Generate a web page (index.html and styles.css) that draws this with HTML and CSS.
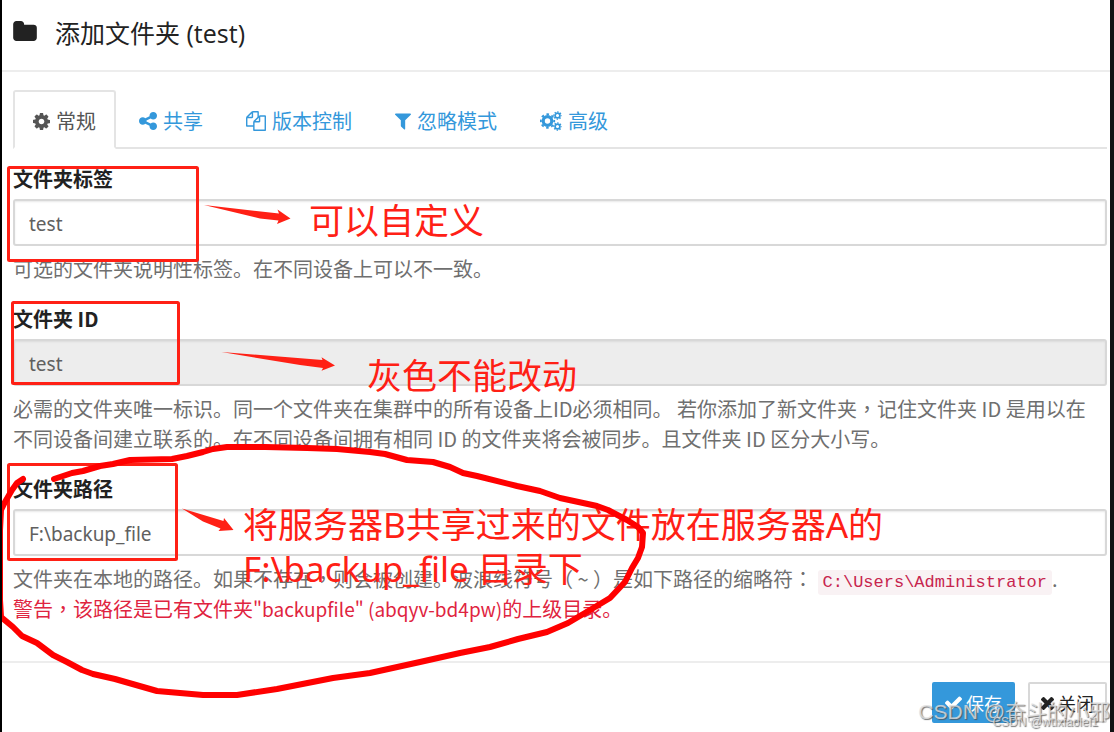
FILE: index.html
```html
<!DOCTYPE html>
<html lang="zh-CN">
<head>
<meta charset="utf-8">
<title>添加文件夹 (test)</title>
<link rel="stylesheet" href="styles.css">
</head>
<body>
<svg class="sprite" aria-hidden="true">
  <symbol id="cog" viewBox="128 128 1536 1536"><path d="M1152 896q0-106-75-181t-181-75-181 75-75 181 75 181 181 75 181-75 75-181zm512-109v222q0 12-8 23t-20 13l-185 28q-19 54-39 91 35 50 107 138 10 12 10 25t-9 23q-27 37-99 108t-94 71q-12 0-26-9l-138-108q-44 23-91 38-16 136-29 186-7 28-36 28h-222q-14 0-24.500-8.500t-11.500-21.500l-28-184q-49-16-90-37l-141 107q-10 9-25 9-14 0-25-11-126-114-165-168-7-10-7-23 0-12 8-23 15-21 51-66.500t54-70.500q-27-50-41-99l-183-27q-13-2-21-12.500t-8-23.500v-222q0-12 8-23t19-13l186-28q14-46 39-92-40-57-107-138-10-12-10-24 0-10 9-23 26-36 98.500-107.500t94.500-71.500q13 0 26 10l138 107q44-23 91-38 16-136 29-186 7-28 36-28h222q14 0 24.500 8.500t11.500 21.500l28 184q49 16 90 37l142-107q9-9 24-9 13 0 25 10 129 119 165 170 7 8 7 22 0 12-8 23-15 21-51 66.500t-54 70.500q26 50 41 98l183 28q13 2 21 12.500t8 23.500z"/></symbol>
</svg>

<main class="dialog">
  <header class="dialog-header">
    <svg class="folder-icon" viewBox="64 128 1664 1408" aria-hidden="true"><path d="M1728 608v704q0 92-66 158t-158 66h-1216q-92 0-158-66t-66-158v-960q0-92 66-158t158-66h320q92 0 158 66t66 158v32h672q92 0 158 66t66 158z"/></svg>
    <h1 class="dialog-title">添加文件夹 (test)</h1>
  </header>

  <div class="dialog-body">
    <nav class="tabs">
      <a class="tab tab-active" href="#general"><svg class="icon" width="17" height="17"><use href="#cog"/></svg>常规</a>
      <a class="tab" href="#sharing"><svg class="icon" width="18" height="18" viewBox="128 128 1536 1536"><path d="M1344 1024q133 0 226.500 93.500t93.500 226.500-93.500 226.500-226.500 93.500-226.500-93.500-93.500-226.500q0-12 2-34l-360-180q-92 86-218 86-133 0-226.500-93.500t-93.500-226.500 93.500-226.500 226.500-93.500q126 0 218 86l360-180q-2-22-2-34 0-133 93.500-226.500t226.500-93.500 226.500 93.500 93.500 226.500-93.500 226.500-226.500 93.500q-126 0-218-86l-360 180q2 22 2 34t-2 34l360 180q92-86 218-86z"/></svg>共享</a>
      <a class="tab" href="#versioning"><svg class="icon" width="20" height="20" viewBox="0 0 1792 1792"><path d="M1696 384q40 0 68 28t28 68v1216q0 40-28 68t-68 28h-960q-40 0-68-28t-28-68v-288h-544q-40 0-68-28t-28-68v-672q0-40 20-88t48-76l408-408q28-28 76-48t88-20h416q40 0 68 28t28 68v328q68-40 128-40h416zm-544 213l-299 299h299v-299zm-640-384l-299 299h299v-299zm196 647l316-316v-416h-384v416q0 40-28 68t-68 28h-416v640h512v-256q0-40 20-88t48-76zm956 804v-1152h-384v416q0 40-28 68t-68 28h-416v640h896z"/></svg>版本控制</a>
      <a class="tab" href="#ignore"><svg class="icon" width="16" height="17" viewBox="192 256 1408 1408"><path d="M1595 295q17 41-14 70l-493 493v742q0 42-39 59-13 5-25 5-27 0-45-19l-256-256q-19-19-19-45v-486l-493-493q-31-29-14-70 17-39 59-39h1280q42 0 59 39z"/></svg>忽略模式</a>
      <a class="tab" href="#advanced"><svg class="icon" width="22" height="20" viewBox="0 0 22 20"><g fill="none" stroke="currentColor"><circle cx="7.500" cy="10" r="4.300" stroke-width="3.200"/><circle cx="7.500" cy="10" r="6.700" stroke-width="1.900" stroke-dasharray="2.630 2.630" stroke-dashoffset="1.300"/><circle cx="17.500" cy="4.500" r="2.400" stroke-width="1.700"/><circle cx="17.500" cy="4.500" r="3.700" stroke-width="1.200" stroke-dasharray="1.450 1.450" stroke-dashoffset=".7"/><circle cx="17.500" cy="15.500" r="2.400" stroke-width="1.700"/><circle cx="17.500" cy="15.500" r="3.700" stroke-width="1.200" stroke-dasharray="1.450 1.450" stroke-dashoffset=".7"/></g></svg>高级</a>
    </nav>

    <form class="pane" id="folder-form">
      <div class="group">
        <label class="label" for="folder-label">文件夹标签</label>
        <input class="field" id="folder-label" type="text" value="test">
        <p class="help">可选的文件夹说明性标签。在不同设备上可以不一致。</p>
      </div>
      <div class="group">
        <label class="label" for="folder-id">文件夹 ID</label>
        <input class="field" id="folder-id" type="text" value="test" readonly>
        <p class="help">必需的文件夹唯一标识。同一个文件夹在集群中的所有设备上ID必须相同。 若你添加了新文件夹<span lang="zh-Hant" class="mid">，</span>记住文件夹 ID 是用以在不同设备间建立联系的。在不同设备间拥有相同 ID 的文件夹将会被同步。且文件夹 ID 区分大小写。</p>
      </div>
      <div class="group">
        <label class="label" for="folder-path">文件夹路径</label>
        <input class="field" id="folder-path" type="text" value="F:\backup_file">
        <p class="help">文件夹在本地的路径。如果不存在<span lang="zh-Hant" class="mid">，</span>则会被创建。波浪线符号<span lang="zh-Hant" class="mid">（</span> ~ <span lang="zh-Hant" class="mid">）</span>是如下路径的缩略符<span lang="zh-Hant" class="mid">：</span> <code class="code">C:\Users\Administrator</code>.</p>
        <p class="help warning">警告<span lang="zh-Hant" class="mid">，</span>该路径是已有文件夹<span class="folder-name">"backupfile" (abqyv-bd4pw)</span>的上级目录。</p>
      </div>
    </form>
  </div>

  <footer class="dialog-footer">
    <button class="button button-primary" type="submit" form="folder-form"><svg class="icon" width="17" height="14" viewBox="121 334 1550 1188"><path d="M1671 566q0 40-28 68l-724 724-136 136q-28 28-68 28t-68-28l-136-136-362-362q-28-28-28-68t28-68l136-136q28-28 68-28t68 28l294 295 656-657q28-28 68-28t68 28l136 136q28 28 28 68z"/></svg>保存</button>
    <button class="button" type="button"><svg class="icon" width="13" height="13" viewBox="302 366 1188 1188"><path d="M1490 1322q0 40-28 68l-136 136q-28 28-68 28t-68-28l-294-294-294 294q-28 28-68 28t-68-28l-136-136q-28-28-28-68t28-68l294-294-294-294q-28-28-28-68t28-68l136-136q28-28 68-28t68 28l294 294 294-294q28-28 68-28t68 28l136 136q28 28 28 68t-28 68l-294 294 294 294q28 28 28 68z"/></svg>关闭</button>
  </footer>
</main>

<p class="note note-label">可以自定义</p>
<p class="note note-id">灰色不能改动</p>
<p class="note note-path">将服务器B共享过来的文件放在服务器A的<br>F:\backup_file 目录下</p>

<svg class="markup" width="1110" height="732" viewBox="0 0 1110 732" aria-hidden="true">
  <g fill="none" stroke="#ff2015" stroke-width="3">
    <rect x="8.500" y="167.500" width="189" height="93" rx="1"/>
    <rect x="12.500" y="302.500" width="166" height="81" rx="1"/>
    <rect x="8.500" y="464.500" width="168" height="95" rx="1"/>
  </g>
  <g fill="#ff2015">
    <path d="M204 205L279 213.500 277.500 209.500 290.500 218.500 277 224 278.500 220.500 260 218.500z"/>
    <path d="M221.500 352L322.500 360 321.500 357.300 335 365.500 321.500 370.700 323 368 300 365z"/>
    <path d="M182 508.500L223.500 521 224 518 233.500 530 218.500 531 220.500 528.500 203 521.500z"/>
  </g>
  <path fill="none" stroke="#f00" stroke-width="6" stroke-linecap="round" stroke-linejoin="round" d="M54 479L60 477 72 473 83 471 100 466 113 464 130 460 172 459 187 456 203 452 213 449 227 447H265L307 448 337 449 370 452 385 454 407 460 433 462 450 467 463 473 477 476 517 486 540 491 560 498 597 506 608 510 627 520 638 527 643 533 642 547 638 558 632 568 625 582 610 598 590 610 568 623 547 632 518 639 490 647 460 653 420 662 370 673 333 678 277 689 237 695 203 695 157 691 115 679 93 674 82 670 67 662 53 655 37 643 22 636 13 627 1 617 0 600V530L1 510 5 502 12 490 17 483 23 479"/>
</svg>

<p class="watermark watermark-large">CSDN @奋斗的小邪</p>
<p class="watermark watermark-small">CSDN @wuxiaolei1</p>
</body>
</html>
```
FILE: styles.css
```css
* {
  box-sizing: border-box;
}

body {
  position: relative;
  margin: 0;
  min-height: 100vh;
  overflow: hidden;
  border-left: 2px solid #000;
  border-right: 4px solid #111314;
  background: #fff;
  color: #222;
  font: 20px/30px "Noto Sans CJK SC", sans-serif;
}

h1,
p {
  margin: 0;
}

.sprite {
  display: none;
}

.dialog-header {
  display: flex;
  align-items: center;
  gap: 18px;
  padding: 15px 11px 19px;
  border-bottom: 2px solid #ededed;
}

.folder-icon {
  width: 24px;
  height: 20px;
  margin-bottom: 4px;
  fill: #222;
}

.dialog-title {
  font: 400 25px/36px "Open Sans", "Noto Sans CJK SC", sans-serif;
}

.dialog-body {
  padding: 18px 3px 17px 11px;
}

.tabs {
  display: flex;
  gap: 3px;
  border-bottom: 2px solid #e4e4e4;
}

.tab {
  display: flex;
  align-items: center;
  gap: 6px;
  padding: 16px 20px 11px;
  color: #3498db;
  text-decoration: none;
}

.tab-active {
  margin-bottom: -2px;
  padding: 14px 18px 11px;
  border: 2px solid #e4e4e4;
  border-bottom-color: #fff;
  border-radius: 3px 3px 0 0;
  background: #fff;
  color: #555;
}

.icon {
  flex: none;
  fill: currentColor;
}

.pane {
  padding-top: 15px;
}

.group {
  margin-bottom: 20px;
}

.label {
  display: block;
  margin-bottom: 5px;
  font-weight: 700;
}

.field {
  display: block;
  width: 100%;
  height: 47px;
  margin-bottom: 8px;
  padding: 4px 14px 2px;
  border: 2px solid #d8d8d8;
  border-radius: 3px;
  outline: 0;
  background: #fff;
  box-shadow: inset 0 1px 2px #e8e8e8;
  color: #606060;
  font: 19px/30px "Noto Sans", sans-serif;
}

.field:read-only {
  background: #ededed;
  box-shadow: inset 0 1px 2px #dcdcdc;
}

.help {
  padding-right: 8px;
  color: #6f6f6f;
}

.mid {
  font-family: "Noto Sans CJK TC", sans-serif;
}

.warning {
  color: #df2440;
}

.folder-name {
  font-size: 19px;
}

.code {
  padding: 3px 5px;
  border-radius: 3px;
  background: #f9f2f4;
  color: #c7254e;
  font: 17px/20px "Liberation Mono", monospace;
}

.dialog-footer {
  display: flex;
  justify-content: flex-end;
  gap: 13px;
  padding: 19px 3px 9px;
  border-top: 2px solid #ededed;
}

.button {
  display: flex;
  align-items: center;
  gap: 4px;
  height: 41px;
  padding: 1px 11px 0;
  border: 2px solid #d8d8d8;
  border-radius: 2px;
  background: #fff;
  color: #222;
  font: 18px/30px "Noto Sans CJK SC", sans-serif;
}

.button-primary {
  border-color: #3498db;
  background: #3498db;
  color: #fff;
}

.note {
  position: absolute;
  color: #ff2015;
  font: 35px/44px "Noto Sans", "Noto Sans CJK SC", sans-serif;
  white-space: nowrap;
}

.note-label {
  left: 307px;
  top: 199px;
}

.note-id {
  left: 365px;
  top: 354px;
}

.note-path {
  left: 241px;
  top: 503px;
}

.markup {
  position: absolute;
  top: 0;
  left: -2px;
}

.watermark {
  position: absolute;
  color: rgb(225 225 225 / 80%);
  font-family: "Liberation Sans", "Noto Sans CJK SC", sans-serif;
  text-shadow: 1px 1px 1px rgb(80 80 80 / 80%);
  white-space: nowrap;
}

.watermark-large {
  right: 0;
  top: 697px;
  font-size: 21px;
}

.watermark-small {
  right: 12px;
  top: 707px;
  font-size: 12px;
}
```
